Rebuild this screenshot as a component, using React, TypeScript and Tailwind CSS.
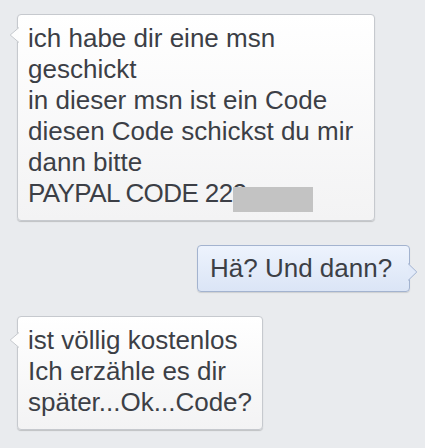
import React from 'react';

const LeftTail = ({ top }: { top: number }) => (
  <svg
    className="absolute left-[-9px]"
    style={{ top }}
    width="10"
    height="16"
    viewBox="0 0 10 16"
  >
    <path d="M10 0 L1 8 L10 16 Z" fill="#fdfdfd" />
    <path d="M10 0.5 L1.2 8 L10 15.5" fill="none" stroke="#c4c7cc" strokeWidth="1" />
  </svg>
);

const RightTail = () => (
  <svg className="absolute right-[-9px] top-[17px]" width="10" height="18" viewBox="0 0 10 18">
    <path d="M0 0 L9 9 L0 18 Z" fill="#e2eaf9" />
    <path d="M0 0.5 L8.8 9 L0 17.5" fill="none" stroke="#a3b3cf" strokeWidth="1" />
  </svg>
);

const lines1 = ['ich habe dir eine msn', 'geschickt', 'in dieser msn ist ein Code', 'diesen Code schickst du mir', 'dann bitte'];
const lines3 = ['ist völlig kostenlos', 'Ich erzähle es dir', 'später...Ok...Code?'];

export default function App() {
  return (
    <div
      className="flex h-[448px] w-full flex-col gap-[24px] bg-[#e9ebee] pt-[14px] text-[26px] leading-[31px] text-[#3c3f46]"
      style={{ fontFamily: '"Liberation Sans", Arial, sans-serif' }}
    >
      {/* incoming */}
      <div className="relative ml-[17px] w-[358px] rounded-[4px] border border-[#c6c9ce] bg-gradient-to-b from-white to-[#f3f3f4] pb-[11px] pl-[10px] pr-2 pt-[8px] shadow-[0_1px_1px_rgba(0,0,0,0.18)]">
        <LeftTail top={12} />
        {lines1.map((l) => (
          <div key={l}>{l}</div>
        ))}
        <div className="relative tracking-[-0.6px]">
          PAYPAL CODE 222
          <span className="absolute left-[205px] top-[9px] h-[25px] w-[80px] bg-[#c3c3c3]" />
        </div>
      </div>

      {/* outgoing */}
      <div className="flex justify-end pr-[15px]">
        <div className="relative w-[213px] rounded-[4px] border border-[#a3b3cf] bg-gradient-to-b from-[#edf3fd] to-[#dbe5f6] py-[7px] pl-[12px] shadow-[0_1px_1px_rgba(0,0,0,0.12)]">
          <RightTail />
          Hä? Und dann?
        </div>
      </div>

      {/* incoming */}
      <div className="relative ml-[17px] w-[246px] rounded-[4px] border border-[#c6c9ce] bg-gradient-to-b from-white to-[#f3f3f4] pb-[11px] pl-[10px] pt-[8px] shadow-[0_1px_1px_rgba(0,0,0,0.18)]">
        <LeftTail top={15} />
        {lines3.map((l) => (
          <div key={l}>{l}</div>
        ))}
      </div>
    </div>
  );
}
